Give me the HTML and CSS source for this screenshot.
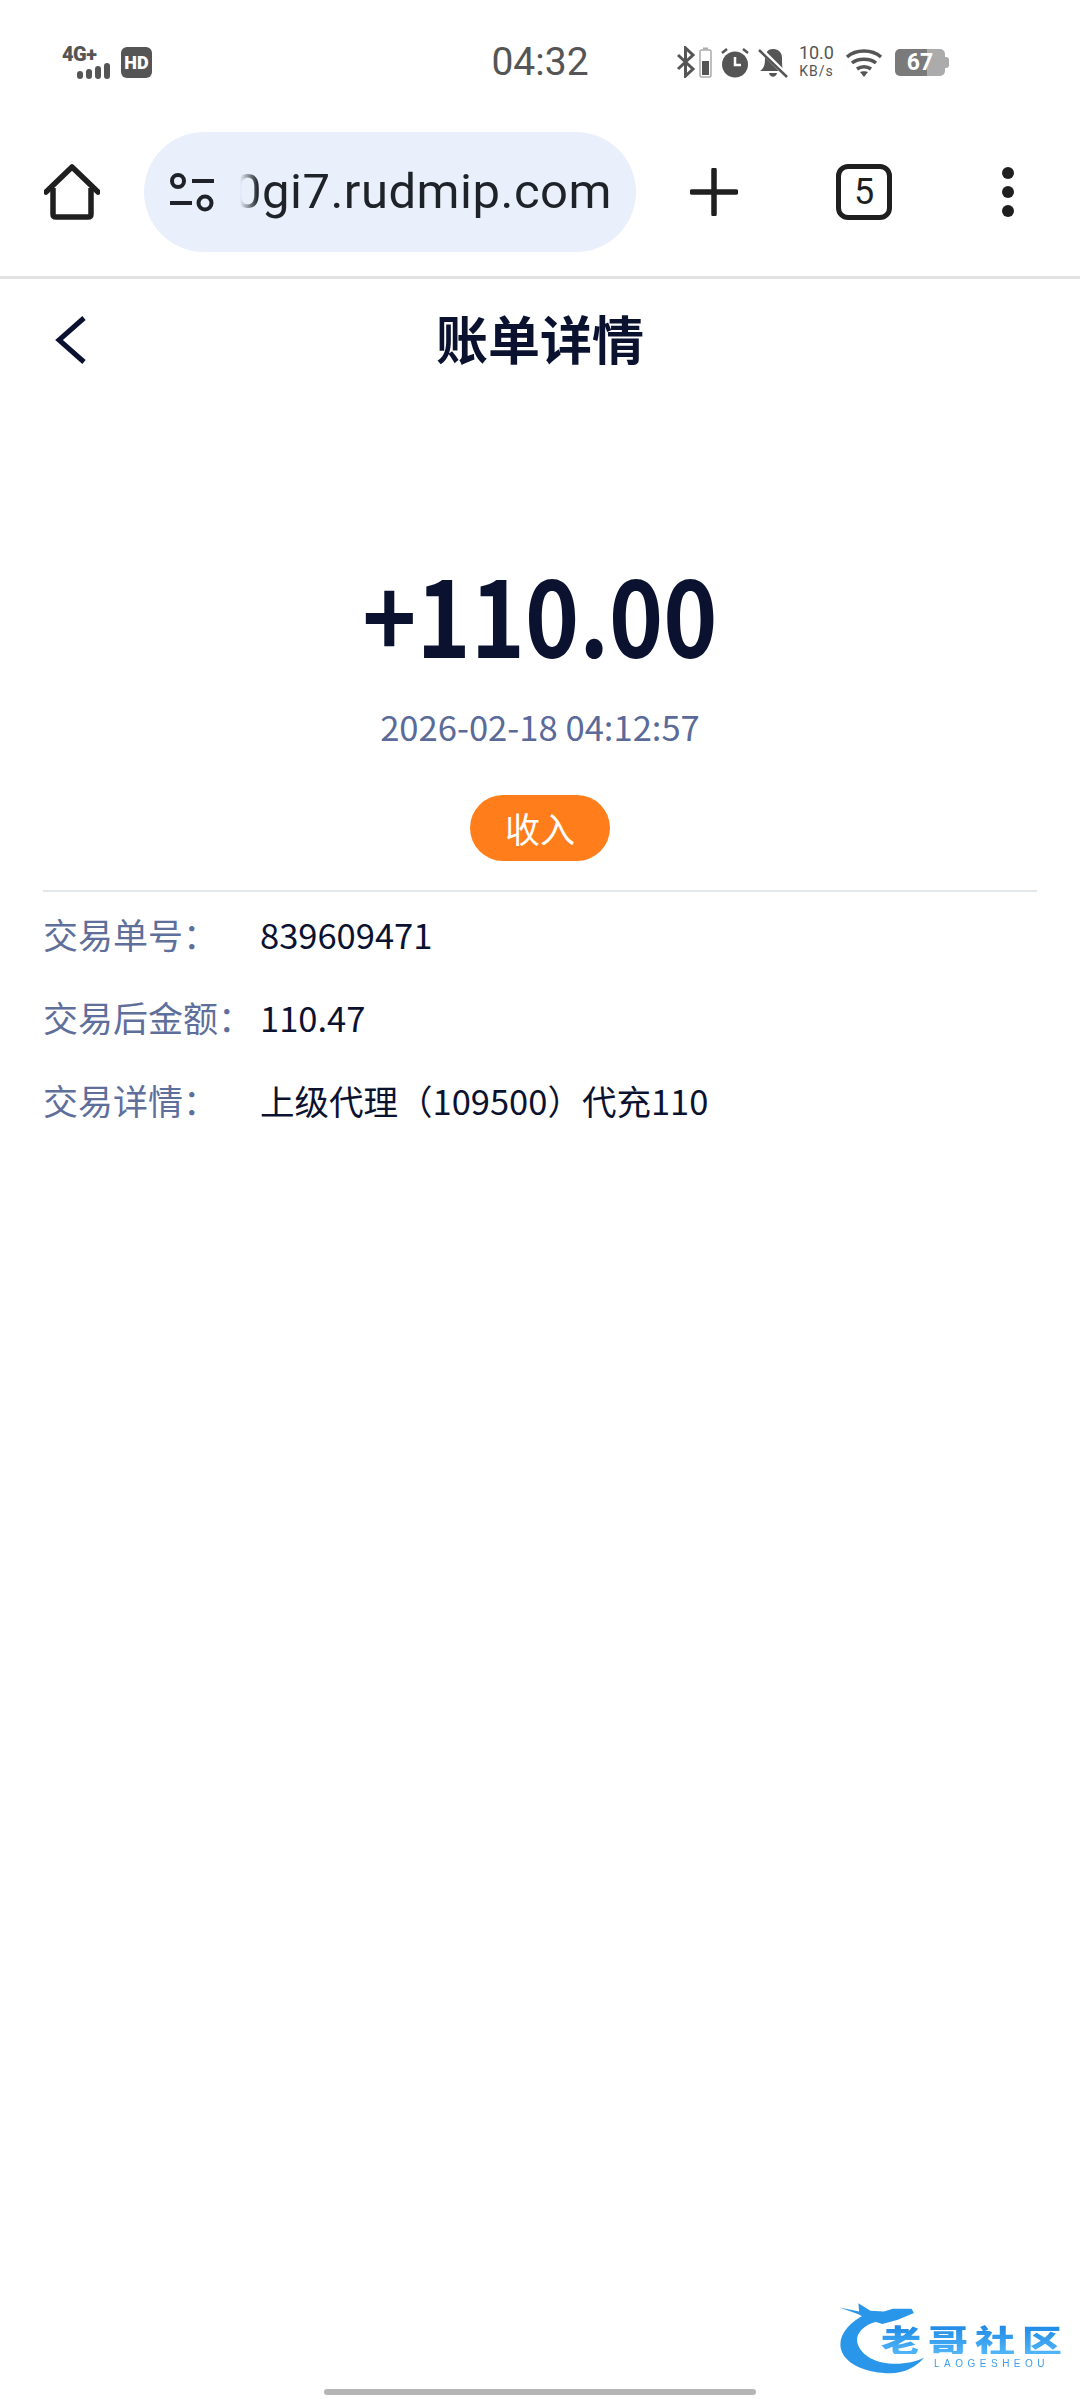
FILE: index.html
```html
<!DOCTYPE html>
<html lang="zh-CN">
<head>
  <meta charset="UTF-8" />
  <title>账单详情</title>
  <link rel="stylesheet" href="styles.css">
</head>
<body>
  <div class="status-bar">
    <div class="status-left">
      <div class="signal">
        <div class="net">4G+</div>
        <div class="bars"><i class="b1"></i><i class="b2"></i><i class="b3"></i><i class="b4"></i></div>
      </div>
      <span class="hd">HD</span>
    </div>
    <div class="time">04:32</div>
    <div class="status-right">
      <svg class="ic-bt" width="20" height="32" viewBox="0 0 20 32"><path d="M2 9 L17 23 L9.500 30 V2 L17 9 L2 23" fill="none" stroke="#555" stroke-width="3"/></svg>
      <svg class="ic-cell" width="13" height="31" viewBox="0 0 13 31"><rect x="1" y="3" width="11" height="27" rx="1.500" fill="none" stroke="#aaa" stroke-width="1.500"/><rect x="4" y="0.500" width="5" height="2" fill="#aaa"/><rect x="3" y="14" width="7" height="14" fill="#555"/></svg>
      <svg width="30" height="31" viewBox="0 0 30 31"><circle cx="15" cy="17.500" r="13" fill="#555"/><path d="M15 10 V18 H21" fill="none" stroke="#fff" stroke-width="2.500"/><path d="M2 6 L7 2 M28 6 L23 2" stroke="#555" stroke-width="2.500"/></svg>
      <svg width="30" height="31" viewBox="0 0 30 31"><path d="M15 2 C9 2 7 7 7 12 C7 18 6 21 2 24 H25 C24 20 24 16 24 11 C24 6 21 2 15 2 Z M11 26 C12 31 18 31 19 26 Z" fill="#555"/><path d="M1 1 L29 29" stroke="#fff" stroke-width="5"/><path d="M1 3 L29 30" stroke="#555" stroke-width="2.500"/></svg>
      <div class="speed"><span>10.0</span><span class="unit">KB/s</span></div>
      <svg class="ic-wifi" width="38" height="30" viewBox="0 0 38 30"><path d="M2 10 C11 2 27 2 36 10 M7 16 C13 11 25 11 31 16 M12 22 C16 19 22 19 26 22" fill="none" stroke="#555" stroke-width="3.500"/><path d="M15 25 L19 30 L23 25 C21 24 17 24 15 25 Z" fill="#555"/></svg>
      <div class="battery"><span>67</span></div>
    </div>
  </div>

  <div class="toolbar">
    <svg class="ic-home" width="56" height="56" viewBox="0 0 56 56"><path d="M2 28 L28 3 L54 28" fill="none" stroke="#1f1f1f" stroke-width="5.500" stroke-linecap="round" stroke-linejoin="round"/><path d="M9 24 V50 Q9 53 12 53 H44 Q47 53 47 50 V24" fill="none" stroke="#1f1f1f" stroke-width="5.500"/></svg>
    <div class="url-pill">
      <svg width="46" height="40" viewBox="0 0 46 40"><circle cx="9" cy="9" r="6" fill="none" stroke="#1f2329" stroke-width="4"/><path d="M23 9 H45 M1 31 H23" stroke="#1f2329" stroke-width="4"/><circle cx="36" cy="31" r="6.500" fill="none" stroke="#1f2329" stroke-width="4"/></svg>
      <div class="url"><span>0gi7.rudmip.com</span></div>
    </div>
    <svg class="ic-plus" width="48" height="48" viewBox="0 0 48 48"><path d="M2 24 H46 M24 2 V46" stroke="#1f1f1f" stroke-width="5.500" stroke-linecap="round"/></svg>
    <div class="tabs">5</div>
    <div class="dots"><i></i><i></i><i></i></div>
  </div>

  <div class="page-head">
    <svg width="34" height="50" viewBox="0 0 34 50"><path d="M30 3 L5 25 L30 47" fill="none" stroke="#0b1230" stroke-width="5"/></svg>
    <h1>账单详情</h1>
  </div>

  <div class="summary">
    <div class="amount">+110.00</div>
    <div class="date">2026-02-18 04:12:57</div>
    <div class="tag">收入</div>
  </div>

  <div class="details">
    <div class="row"><span class="label">交易单号：</span><span class="value">839609471</span></div>
    <div class="row"><span class="label">交易后金额：</span><span class="value">110.47</span></div>
    <div class="row"><span class="label">交易详情：</span><span class="value">上级代理（109500）代充110</span></div>
  </div>

  <div class="watermark">
    <svg class="wm-dragon" width="280" height="120" viewBox="0 0 816 350">
      <path d="M190 100 C140 125 108 165 120 205 C135 250 200 272 262 272 C305 272 340 252 362 226 C320 248 250 252 205 228 C170 208 155 175 175 150 C190 132 210 122 235 120 Z" fill="#2a96ea"/>
      <path d="M115 80 L172 92 L170 68 L205 90 L245 92 L270 84 L325 84 L332 96 L285 116 L240 128 L200 116 L170 100 Z" fill="#2a96ea"/>
    </svg>
    <div class="wm-name">老哥社区</div>
    <div class="wm-sub">LAOGESHEOU</div>
  </div>

  <div class="home-bar"></div>
</body>
</html>
```

FILE: styles.css
```css
* {
  box-sizing: border-box;
}
html, body {
  margin: 0;
  padding: 0;
}
body {
  position: relative;
  width: 1080px;
  height: 2400px;
  overflow: hidden;
  background: #fff;
  font-family: "Noto Sans CJK SC", "Noto Sans", sans-serif;
  color: #0b1230;
}

/* status bar */
.status-bar {
  display: grid;
  grid-template-columns: 1fr auto 1fr;
  align-items: center;
  height: 124px;
  padding: 0 62px;
  color: #555;
  font-family: Roboto, sans-serif;
}
.status-left {
  display: flex;
  align-items: center;
  gap: 11px;
}
.signal {
  display: flex;
  flex-direction: column;
  width: 48px;
}
.net {
  font-size: 20px;
  font-weight: 900;
  line-height: 18px;
  letter-spacing: -0.5px;
}
.bars {
  display: flex;
  align-items: flex-end;
  justify-content: flex-end;
  gap: 3px;
  height: 16px;
}
.bars i {
  width: 6px;
  background: #555;
  border-radius: 3px;
}
.bars .b1 { height: 8px; }
.bars .b2 { height: 10px; }
.bars .b3 { height: 13px; }
.bars .b4 { height: 16px; }
.hd {
  width: 31px;
  height: 31px;
  border-radius: 6px;
  background: #555;
  color: #fff;
  font-size: 18px;
  font-weight: 900;
  line-height: 31px;
  text-align: center;
}
.time {
  font-size: 39px;
}
.status-right {
  display: flex;
  align-items: center;
  justify-content: flex-end;
  margin-right: 73px;
}
.status-right svg {
  flex: none;
  margin-left: 8px;
}
.status-right .ic-cell {
  margin-left: 3px;
}
.speed {
  display: flex;
  flex-direction: column;
  align-items: center;
  margin-left: 11px;
  font-size: 18px;
  line-height: 18px;
}
.speed .unit {
  font-size: 14px;
  line-height: 18px;
  letter-spacing: 1px;
}
.status-right .ic-wifi {
  margin-left: 11px;
}
.battery {
  position: relative;
  width: 50px;
  height: 27px;
  margin-left: 12px;
  border-radius: 5px;
  background: linear-gradient(to right, #7a7a7a 65%, #ababab 65%);
  color: #fff;
  font-size: 23px;
  font-weight: 700;
  line-height: 27px;
  text-align: center;
}
.battery::after {
  content: "";
  position: absolute;
  right: -4px;
  top: 8px;
  width: 4px;
  height: 11px;
  border-radius: 0 3px 3px 0;
  background: #ababab;
}

/* browser toolbar */
.toolbar {
  display: flex;
  align-items: center;
  height: 155px;
  padding: 9px 0 26px 44px;
  border-bottom: 3px solid #e2e2e2;
}
.url-pill {
  display: flex;
  align-items: center;
  width: 492px;
  height: 120px;
  margin-left: 44px;
  padding: 0 24px 0 25px;
  border-radius: 60px;
  background: #e9f0fb;
}
.url-pill svg {
  flex: none;
}
.url {
  flex: 1;
  display: flex;
  justify-content: flex-end;
  overflow: hidden;
  margin-left: 25px;
  font-family: Roboto, sans-serif;
  font-size: 49px;
  letter-spacing: 0.5px;
  white-space: nowrap;
  color: #1f2329;
  -webkit-mask-image: linear-gradient(to right, transparent 0, #000 18px);
  mask-image: linear-gradient(to right, transparent 0, #000 18px);
}
.ic-plus {
  margin-left: 54px;
}
.tabs {
  width: 56px;
  height: 56px;
  margin-left: 98px;
  border: 5px solid #1f1f1f;
  border-radius: 12px;
  font-family: Roboto, sans-serif;
  font-size: 36px;
  line-height: 46px;
  text-align: center;
  color: #1f1f1f;
}
.dots {
  display: flex;
  flex-direction: column;
  gap: 7px;
  margin-left: 110px;
}
.dots i {
  width: 12px;
  height: 12px;
  border-radius: 50%;
  background: #1f1f1f;
}

/* page */
.page-head {
  display: grid;
  grid-template-columns: 1fr auto 1fr;
  align-items: center;
  height: 122px;
  padding: 0 54px;
}
.page-head h1 {
  margin: 0 0 5px;
  font-size: 52px;
  font-weight: 700;
}
.summary {
  display: flex;
  flex-direction: column;
  align-items: center;
  margin: 0 43px;
  padding: 151px 0 29px;
  border-bottom: 2px solid #e3e8ed;
}
.amount {
  font-size: 105px;
  font-weight: 700;
  line-height: 120px;
  transform: scaleX(0.875);
}
.date {
  margin-top: 29px;
  font-size: 34.600px;
  line-height: 50px;
  color: #5a6a99;
}
.tag {
  width: 140px;
  height: 66px;
  margin-top: 44px;
  border-radius: 33px;
  background: #ff7d1a;
  color: #fff;
  font-size: 35px;
  line-height: 66px;
  text-align: center;
}
.details {
  display: flex;
  flex-direction: column;
  gap: 33px;
  padding: 17px 43px;
}
.row {
  display: flex;
  font-size: 34.500px;
  line-height: 50px;
}
.label {
  width: 217px;
  font-size: 35px;
  color: #5f6f9b;
}

/* watermark + gesture bar lie over the page */
.watermark {
  position: absolute;
  left: 800px;
  top: 2280px;
  width: 280px;
  height: 120px;
  filter: blur(0.6px);
}
.wm-dragon {
  display: block;
}
.wm-name {
  position: absolute;
  left: 81px;
  top: 43px;
  font-size: 40px;
  font-weight: 900;
  line-height: 40px;
  letter-spacing: 7px;
  white-space: nowrap;
  background: linear-gradient(#1b86e4, #52b6f8);
  -webkit-background-clip: text;
  background-clip: text;
  color: transparent;
  transform: scaleY(0.78);
  transform-origin: top left;
}
.wm-sub {
  position: absolute;
  left: 134px;
  top: 78px;
  font-family: "Liberation Sans", sans-serif;
  font-size: 10px;
  line-height: 12px;
  letter-spacing: 4.500px;
  white-space: nowrap;
  color: #3f9fec;
}
.home-bar {
  position: absolute;
  left: 324px;
  top: 2389px;
  width: 432px;
  height: 6px;
  border-radius: 3px;
  background: #b5b5b5;
}
```
